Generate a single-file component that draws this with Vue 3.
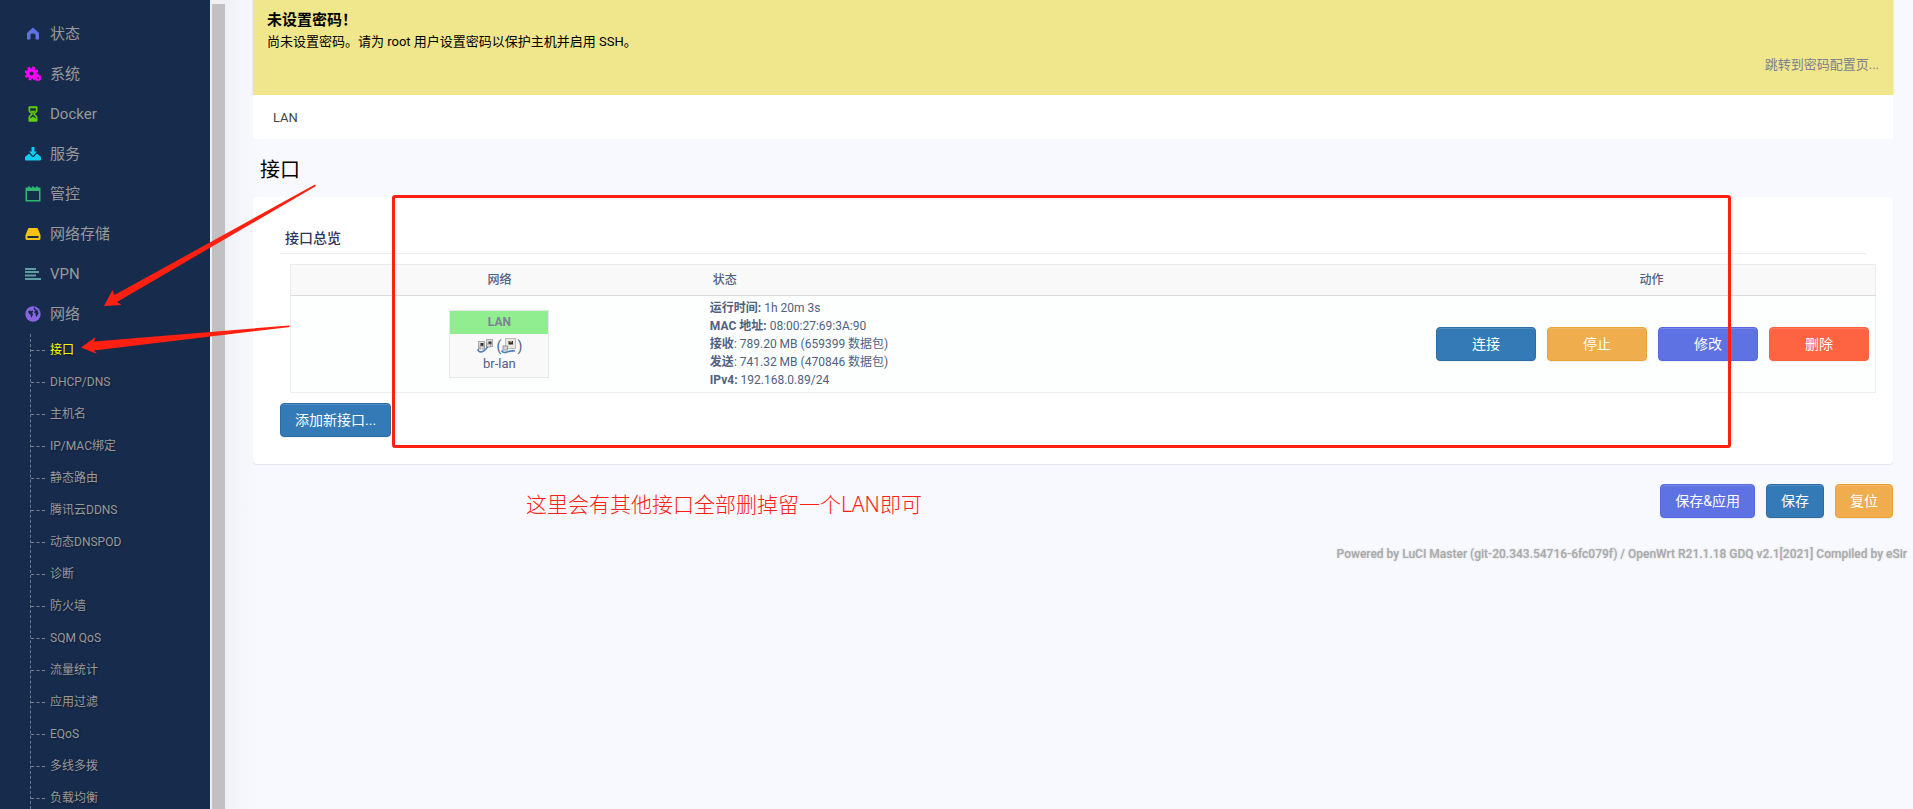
<script setup>
const menu = [
  { label: '状态', icon: 'home' },
  { label: '系统', icon: 'cogs' },
  { label: 'Docker', icon: 'hourglass' },
  { label: '服务', icon: 'save' },
  { label: '管控', icon: 'calendar' },
  { label: '网络存储', icon: 'hdd' },
  { label: 'VPN', icon: 'align' },
  { label: '网络', icon: 'globe' },
]
const submenu = [
  '接口', 'DHCP/DNS', '主机名', 'IP/MAC绑定', '静态路由', '腾讯云DDNS', '动态DNSPOD', '诊断',
  '防火墙', 'SQM QoS', '流量统计', '应用过滤', 'EQoS', '多线多拨', '负载均衡',
]
const stats = [
  { label: '运行时间:', sep: '', value: '1h 20m 3s' },
  { label: 'MAC 地址:', sep: '', value: '08:00:27:69:3A:90' },
  { label: '接收', sep: ':', value: '789.20 MB (659399 数据包)' },
  { label: '发送', sep: ':', value: '741.32 MB (470846 数据包)' },
  { label: 'IPv4:', sep: '', value: '192.168.0.89/24' },
]
const actions = [
  { label: '连接', kind: 'blue' },
  { label: '停止', kind: 'amber' },
  { label: '修改', kind: 'indigo' },
  { label: '删除', kind: 'red' },
]
</script>

<template>
  <div class="shell">
    <nav class="sidebar">
      <ul class="menu">
        <li v-for="item in menu" :key="item.label">
          <a href="#" class="menu-link">
            <svg class="menu-icon" viewBox="0 0 16 16" aria-hidden="true">
              <path v-if="item.icon === 'home'" fill="#5e72e4" d="M8 1.500 L14 7 V13.500 H10.500 V9 Q10.500 7.600 8 7.600 Q5.500 7.600 5.500 9 V13.500 H2 V7 Z" />
              <g v-else-if="item.icon === 'cogs'" fill="none" stroke="#f0f">
                <circle cx="6.500" cy="7.500" r="3.700" stroke-width="3.200" />
                <circle cx="6.500" cy="7.500" r="6" stroke-width="2" stroke-dasharray="2.700 2.010" />
                <circle cx="13" cy="12" r="1.800" stroke-width="1.800" />
                <circle cx="13" cy="12" r="2.900" stroke-width="1.200" stroke-dasharray="1.600 1.440" />
              </g>
              <g v-else-if="item.icon === 'hourglass'" fill="none" stroke="#5fcf0f" stroke-width="1.700">
                <path d="M4.500 1.300 H11.500 M4.500 14.700 H11.500" stroke-width="2" stroke-linecap="round" />
                <path d="M4.300 1.500 V4.500 C4.300 6.500 7 7 7 8 C7 9 4.300 9.500 4.300 11.500 V14.500 M11.700 1.500 V4.500 C11.700 6.500 9 7 9 8 C9 9 11.700 9.500 11.700 11.500 V14.500" />
                <path fill="#5fcf0f" stroke="none" d="M5.500 4.800 H10.500 L8.500 7 H7.500 Z M8 10.500 L11 12.500 V14 H5 V12.500 Z" />
              </g>
              <path v-else-if="item.icon === 'save'" fill="#11cdef" d="M6.500 1 H9.500 V5.500 H12 L8 10 L4 5.500 H6.500 Z M3.500 8 H4.700 L6.500 10.300 Q8 11.600 9.500 10.300 L11.300 8 H12.500 L16 11 V13.500 Q16 14.500 15 14.500 H1 Q0 14.500 0 13.500 V11 Z" />
              <path v-else-if="item.icon === 'calendar'" fill="#2fb873" fill-rule="evenodd" d="M3 0.500 H5 V1.500 H7 V0.500 H9 V1.500 H11 V0.500 H13 V1.500 H15.500 V15.500 H0.500 V1.500 H3 Z M2 5 V14 H14 V5 Z" />
              <path v-else-if="item.icon === 'hdd'" fill="#f5c211" fill-rule="evenodd" d="M4 2 H12 Q12.600 2 12.900 2.700 L15.500 9 V12.500 Q15.500 14 14 14 H2 Q0.500 14 0.500 12.500 V9 L3.100 2.700 Q3.400 2 4 2 Z M2.500 10 V12 H13.500 V10 Z" />
              <path v-else-if="item.icon === 'align'" fill="#5f9ea0" d="M0 2 H11 V4 H0 Z M0 5 H14 V7 H0 Z M0 8.500 H11 V10.500 H0 Z M0 12 H16 V14 H0 Z" />
              <g v-else>
                <circle cx="8" cy="8" r="7.700" fill="#8965e0" />
                <path fill="#172b4d" d="M3 5.500 L4.600 4.400 L6.200 5 L7.800 4.400 L8.200 5.800 L7 7 L8.300 8.300 L7.300 9.500 L6.800 11.800 L5.800 10.600 L5.500 8.600 L4.200 8 Z M8.800 1.800 L10.200 1.600 L10 2.800 L11.600 3.600 L13.300 5.800 L13.400 8 L12.200 9.200 L11.600 11 L10.500 9.500 L10.700 7.600 L9.300 6.800 L9.500 5.200 L10.600 4.400 L8.800 3.400 Z" />
              </g>
            </svg>
            <span>{{ item.label }}</span>
          </a>
        </li>
      </ul>
      <ul class="submenu">
        <li v-for="(name, i) in submenu" :key="name">
          <a href="#" :class="['sub-link', { active: i === 0 }]">{{ name }}</a>
        </li>
      </ul>
    </nav>
    <div class="scroll-track"><div class="scroll-thumb"></div></div>

    <main class="main">
      <section class="alert">
        <h4>未设置密码！</h4>
        <p>尚未设置密码。请为 root 用户设置密码以保护主机并启用 SSH。</p>
        <a href="#">跳转到密码配置页...</a>
      </section>
      <div class="tabs"><a href="#">LAN</a></div>
      <h2>接口</h2>

      <section class="card">
        <h3>接口总览</h3>
        <table>
          <thead>
            <tr>
              <th class="col-net">网络</th>
              <th class="col-stat">状态</th>
              <th class="col-act">动作</th>
            </tr>
          </thead>
          <tbody>
            <tr>
              <td>
                <div class="iface">
                  <div class="iface-head">LAN</div>
                  <div class="iface-body">
                    <div class="iface-icons">
                      <svg width="17" height="16" viewBox="0 0 17 16" aria-hidden="true">
                        <rect x="1.500" y="3.500" width="6" height="7" fill="#dcdcd8" stroke="#aaa" />
                        <rect x="3.500" y="5" width="3" height="3" fill="#333" />
                        <rect x="9.500" y="1.500" width="6" height="7" fill="#dcdcd8" stroke="#aaa" />
                        <rect x="11.500" y="3.500" width="3" height="3" fill="#333" />
                        <rect x="3" y="8" width="4" height="3" fill="#ddd" stroke="#888" stroke-width=".7" />
                        <rect x="9.500" y="6" width="4" height="3" fill="#ddd" stroke="#888" stroke-width=".7" />
                        <path d="M1 11 Q1 14 4 14 Q7 13.500 9 11 Q9.500 9.500 11 9" fill="none" stroke="#4a7fc0" stroke-width="1.500" />
                      </svg>
                      <span>(</span>
                      <svg width="16" height="16" viewBox="0 0 16 16" aria-hidden="true">
                        <rect x="4.500" y=".5" width="10" height="10" fill="#e6e6e3" stroke="#bbb" />
                        <rect x="7.500" y="3" width="4.500" height="3.500" fill="#333" />
                        <rect x="8.500" y="3" width="2.500" height="1.300" fill="#b9b04c" />
                        <rect x="2" y="8" width="4.500" height="4" fill="#d5d5d2" stroke="#888" stroke-width=".8" />
                        <path d="M.500 12.500 Q2 15.500 6 14 Q10 12.500 14 13" fill="none" stroke="#4a7fc0" stroke-width="1.700" />
                      </svg>
                      <span>)</span>
                    </div>
                    <div>br-lan</div>
                  </div>
                </div>
              </td>
              <td class="stats">
                <div v-for="s in stats" :key="s.label"><strong>{{ s.label }}</strong>{{ s.sep }} {{ s.value }}</div>
              </td>
              <td>
                <div class="actions">
                  <button v-for="a in actions" :key="a.label" type="button" :class="['btn', 'wide', a.kind]">{{ a.label }}</button>
                </div>
              </td>
            </tr>
          </tbody>
        </table>
        <button type="button" class="btn blue">添加新接口...</button>
      </section>

      <div class="page-actions">
        <button type="button" class="btn indigo">保存&amp;应用</button>
        <button type="button" class="btn blue">保存</button>
        <button type="button" class="btn amber">复位</button>
      </div>
      <footer>Powered by LuCI Master (git-20.343.54716-6fc079f) / OpenWrt R21.1.18 GDQ v2.1[2021] Compiled by eSir</footer>
    </main>

    <div class="mark-box"></div>
    <p class="mark-text">这里会有其他接口全部删掉留一个LAN即可</p>
    <svg class="mark-arrows" width="330" height="370" viewBox="0 0 330 370" aria-hidden="true">
      <path d="M104 306 L112.500 290 L114.500 295 L315 184.500 L316 186 L117 302 L121.500 305 Z" />
      <path d="M81 347.500 L95.500 337 L94 341.500 L289 325.500 L290 327 L94 350.500 L97 354 Z" />
    </svg>
  </div>
</template>

<style>
body {
  background: #f8f9fe;
  overflow: hidden;
}
</style>

<style scoped>
.shell {
  position: relative;
  display: flex;
  height: 100vh;
  overflow: hidden;
  font: 13px/18px Roboto, "Noto Sans CJK SC", sans-serif;
  color: #525f7f;
  background: #f8f9fe;
}
a { text-decoration: none; color: inherit; }
ul { list-style: none; margin: 0; padding: 0; }
h2, h3, h4, p { margin: 0; }

.sidebar {
  flex: none;
  width: 210px;
  overflow: hidden;
  background: #172b4d;
  color: #999;
}
.menu { padding-top: 14px; }
.menu-link {
  display: flex;
  align-items: center;
  gap: 9px;
  height: 40px;
  padding-left: 25px;
  font-size: 15px;
}
.menu-icon { width: 16px; height: 16px; }
.submenu {
  margin-left: 30px;
  border-left: 1px dashed #6f7885;
}
.sub-link {
  display: flex;
  align-items: center;
  gap: 5px;
  height: 32px;
  font-size: 12px;
  text-shadow: 1px 1px 2px rgba(0, 0, 0, .35);
}
.sub-link::before {
  content: "";
  width: 14px;
  border-top: 1px dashed #7b828d;
}
.sub-link.active { color: #ff0; }

.scroll-track {
  flex: none;
  width: 13px;
  padding: 4px 0 0 2px;
  background: #f1f1f1;
}
.scroll-thumb { height: 100%; background: #c1c1c1; }

.main {
  flex: 1;
  min-width: 0;
  padding: 0 20px 0 28px;
  background: linear-gradient(90deg, #eff0f6 0, #f5f6fb 14px, #f8f9fe 40px);
}
.alert {
  box-sizing: border-box;
  height: 95px;
  padding: 9px 14px 0;
  color: #000;
  background: #f0e68c;
  box-shadow: 0 0 2px rgba(136, 152, 170, .4);
}
.alert h4 { font-size: 15px; line-height: 22px; }
.alert p { line-height: 22px; }
.alert a {
  display: block;
  line-height: 24px;
  text-align: right;
  color: #7d8190;
}
.tabs {
  position: relative;
  padding: 1px 20px 0;
  line-height: 43px;
  color: #444;
  background: #fff;
}
h2 {
  padding: 16px 7px 12px;
  font-size: 20px;
  line-height: 30px;
  font-weight: 400;
  color: #000;
}
.card {
  padding: 27px;
  border-radius: 4px;
  background: #fff;
  box-shadow: 0 1px 1px rgba(136, 152, 170, .2);
}
h3 {
  padding: 0 5px;
  font-size: 14px;
  line-height: 29px;
  font-weight: 500;
  color: #32325d;
  border-bottom: 1px solid #eee;
}
table {
  width: 100%;
  margin: 10px 0 10px 10px;
  table-layout: fixed;
  border-collapse: collapse;
  border: 1px solid #ebeced;
  font-size: 12px;
}
th {
  height: 30px;
  padding: 0;
  font-weight: 500;
  background: #f9f9f9;
  border-bottom: 1px solid #dcdcdc;
}
.col-net { width: 26.4%; }
.col-stat { width: 45.3%; padding-left: 5px; text-align: left; }
.col-act { width: 28.3%; }
td {
  padding: 3px 2px;
  vertical-align: middle;
  background: #fcfffe;
}
.iface {
  width: 98px;
  margin: 0 auto;
  border: 1px solid #e6e8ea;
  background: #f9f9f9;
  text-align: center;
}
.iface-head {
  line-height: 23px;
  font-weight: 700;
  color: #7c8491;
  background: #90ee90;
}
.iface-body { padding: 4px 0 5px; font-size: 13px; line-height: 17px; }
.iface-icons {
  display: flex;
  justify-content: center;
  height: 17px;
  font-size: 14px;
}
.iface-icons span:first-of-type { margin-left: 3px; }
.stats strong { font-weight: 700; }
.actions {
  display: flex;
  justify-content: flex-end;
  gap: 11px;
  padding-right: 4px;
}
.btn {
  box-sizing: border-box;
  height: 34px;
  padding: 0 14px;
  border: 1px solid;
  border-radius: 4px;
  font: 14px/20px Roboto, "Noto Sans CJK SC", sans-serif;
  color: #fff;
  box-shadow: inset 0 1px 0 rgba(255, 255, 255, .15), 0 1px 1px rgba(0, 0, 0, .06);
}
.wide { width: 100px; }
.card > .btn { display: block; }
.blue { background: #337ab7; border-color: #2e6da4; }
.amber { background: #f0ad4e; border-color: #eea236; }
.indigo { background: #5e72e4; border-color: #5469e0; }
.red { background: #ff6442; border-color: #fb6340; }
.page-actions {
  display: flex;
  justify-content: flex-end;
  gap: 11px;
  margin-top: 20px;
}
footer {
  margin: 26px -14px 0 0;
  font-size: 12px;
  line-height: 20px;
  font-weight: 500;
  text-align: right;
  color: #aaa;
  text-shadow: 0 0 2px #ccc;
}

.mark-box {
  position: absolute;
  left: 392px;
  top: 195px;
  box-sizing: border-box;
  width: 1339px;
  height: 253px;
  border: 3px solid #ff2012;
  border-radius: 3px;
}
.mark-text {
  position: absolute;
  left: 526px;
  top: 489px;
  font: 300 21px/30px "Noto Sans", "Noto Sans CJK SC", sans-serif;
  white-space: nowrap;
  color: #ff2012;
}
.mark-arrows {
  position: absolute;
  left: 0;
  top: 0;
  fill: #ff2012;
  pointer-events: none;
}
</style>
